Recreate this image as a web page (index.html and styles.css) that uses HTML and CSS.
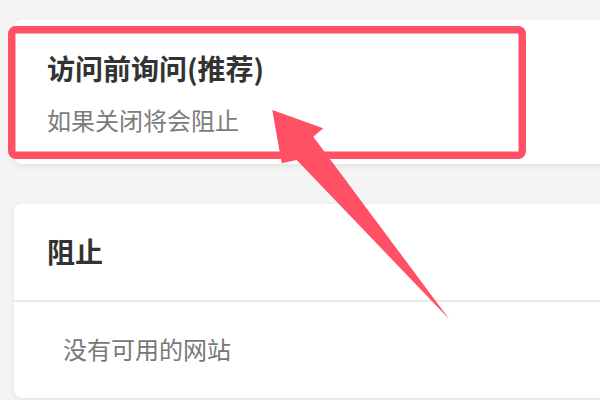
FILE: index.html
```html
<!DOCTYPE html>
<html lang="zh-CN">
<head>
<meta charset="utf-8">
<link rel="stylesheet" href="styles.css">
</head>
<body>
<div class="page">
  <section class="card card-ask">
    <div class="title">访问前询问(推荐)</div>
    <div class="subtitle">如果关闭将会阻止</div>
  </section>
  <section class="card card-block">
    <div class="block-head">
      <div class="title">阻止</div>
    </div>
    <div class="block-list">
      <div class="empty">没有可用的网站</div>
    </div>
  </section>
</div>
<svg class="annotation" width="600" height="400" viewBox="0 0 600 400">
  <rect x="11.75" y="29.75" width="510.5" height="125.5" rx="4" ry="4" fill="none" stroke="#ff5066" stroke-width="7.5"/>
  <polygon points="272.3,110 323.3,128.3 313.3,136.7 449.3,319.3 296.7,160 281.7,163.3" fill="#ff5066"/>
</svg>
</body>
</html>
```

FILE: styles.css
```css
html, body {
  margin: 0;
  padding: 0;
}
body {
  width: 600px;
  height: 400px;
  overflow: hidden;
  background: #f5f5f5;
  font-family: "Noto Sans CJK SC", "Noto Sans", sans-serif;
  position: relative;
}
.page {
  padding: 20px 0 0 14px;
  display: flex;
  flex-direction: column;
  gap: 40px;
}
.card {
  width: 610px;
  background: #ffffff;
  border-radius: 8px;
  box-shadow: 0 2px 7px rgba(0, 0, 0, 0.08);
}
.title {
  font-size: 28px;
  line-height: 36px;
  font-weight: 700;
  color: #333333;
}
.subtitle {
  font-size: 24px;
  line-height: 32px;
  color: #7c7c7c;
  margin-top: 18px;
}
.card-ask {
  height: 144px;
  box-sizing: border-box;
  padding: 30px 0 28px 33px;
}
.card-block {
  height: 194px;
  box-sizing: border-box;
}
.block-head {
  padding: 29px 0 31px 33px;
}
.block-list {
  border-top: 2px solid #ebebeb;
  padding: 31px 0 0 49px;
}
.empty {
  font-size: 24px;
  line-height: 32px;
  color: #777777;
}
.annotation {
  position: absolute;
  left: 0;
  top: 0;
}
```
